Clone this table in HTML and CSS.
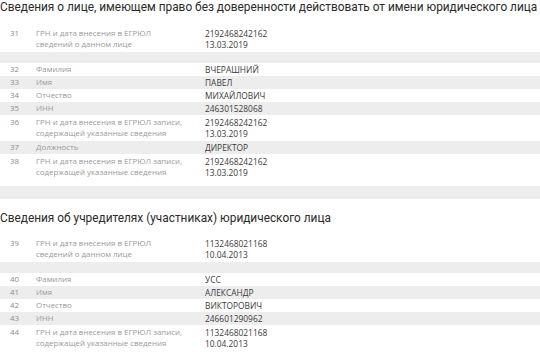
FILE: index.html
```html
<!DOCTYPE html>
<html lang="ru">
<head>
<meta charset="utf-8">
<link rel="stylesheet" href="styles.css">
</head>
<body>
<section class="block">
  <h2 class="title">Сведения о лице, имеющем право без доверенности действовать от имени юридического лица</h2>
  <div class="table">
    <div class="row two"><span class="num">31</span><span class="label">ГРН и дата внесения в ЕГРЮЛ<br>сведений о данном лице</span><span class="val">2192468242162<br>13.03.2019</span></div>
    <div class="row gap"></div>
    <div class="row"><span class="num">32</span><span class="label">Фамилия</span><span class="val">ВЧЕРАШНИЙ</span></div>
    <div class="row alt"><span class="num">33</span><span class="label">Имя</span><span class="val">ПАВЕЛ</span></div>
    <div class="row"><span class="num">34</span><span class="label">Отчество</span><span class="val">МИХАЙЛОВИЧ</span></div>
    <div class="row alt"><span class="num">35</span><span class="label">ИНН</span><span class="val">246301528068</span></div>
    <div class="row two"><span class="num">36</span><span class="label">ГРН и дата внесения в ЕГРЮЛ записи,<br>содержащей указанные сведения</span><span class="val">2192468242162<br>13.03.2019</span></div>
    <div class="row alt"><span class="num">37</span><span class="label">Должность</span><span class="val">ДИРЕКТОР</span></div>
    <div class="row two"><span class="num">38</span><span class="label">ГРН и дата внесения в ЕГРЮЛ записи,<br>содержащей указанные сведения</span><span class="val">2192468242162<br>13.03.2019</span></div>
  </div>
  <div class="separator"></div>
</section>
<section class="block second">
  <h2 class="title">Сведения об учредителях (участниках) юридического лица</h2>
  <div class="table">
    <div class="row two"><span class="num">39</span><span class="label">ГРН и дата внесения в ЕГРЮЛ<br>сведений о данном лице</span><span class="val">1132468021168<br>10.04.2013</span></div>
    <div class="row gap"></div>
    <div class="row"><span class="num">40</span><span class="label">Фамилия</span><span class="val">УСС</span></div>
    <div class="row alt"><span class="num">41</span><span class="label">Имя</span><span class="val">АЛЕКСАНДР</span></div>
    <div class="row"><span class="num">42</span><span class="label">Отчество</span><span class="val">ВИКТОРОВИЧ</span></div>
    <div class="row alt"><span class="num">43</span><span class="label">ИНН</span><span class="val">246601290962</span></div>
    <div class="row two"><span class="num">44</span><span class="label">ГРН и дата внесения в ЕГРЮЛ записи,<br>содержащей указанные сведения</span><span class="val">1132468021168<br>10.04.2013</span></div>
  </div>
</section>
</body>
</html>
```

FILE: styles.css
```css
html, body {
  margin: 0;
  padding: 0;
  background: #ffffff;
}
body {
  width: 540px;
  font-family: "Open Sans", "Liberation Sans", sans-serif;
  color: #333;
  overflow: hidden;
}
.title {
  margin: 0;
  font-family: Roboto, "Open Sans", sans-serif;
  font-weight: 400;
  font-size: 11.85px;
  line-height: 14px;
  color: #2a2a2a;
  white-space: nowrap;
}
.table {
  margin-top: 12px;
}
.row {
  display: grid;
  grid-template-columns: 36px 169px 1fr;
  font-size: 7.9px;
  line-height: 11px;
  padding: 1px 0;
  min-height: 11px;
}
.row.two {
  padding: 2px 0;
}
.row.alt {
  background: #ededed;
}
.row.gap {
  background: #ededed;
  padding: 0;
  height: 10px;
}
.num {
  padding-left: 10px;
  color: #8c8c8c;
}
.label {
  color: #9a9a9a;
}
.val {
  color: #3a3a3a;
  font-size: 8.4px;
}
.separator {
  margin-top: 6px;
  height: 13px;
  background: #ededed;
}
.second {
  margin-top: 12px;
}
.second .table {
  margin-top: 11px;
}
```
